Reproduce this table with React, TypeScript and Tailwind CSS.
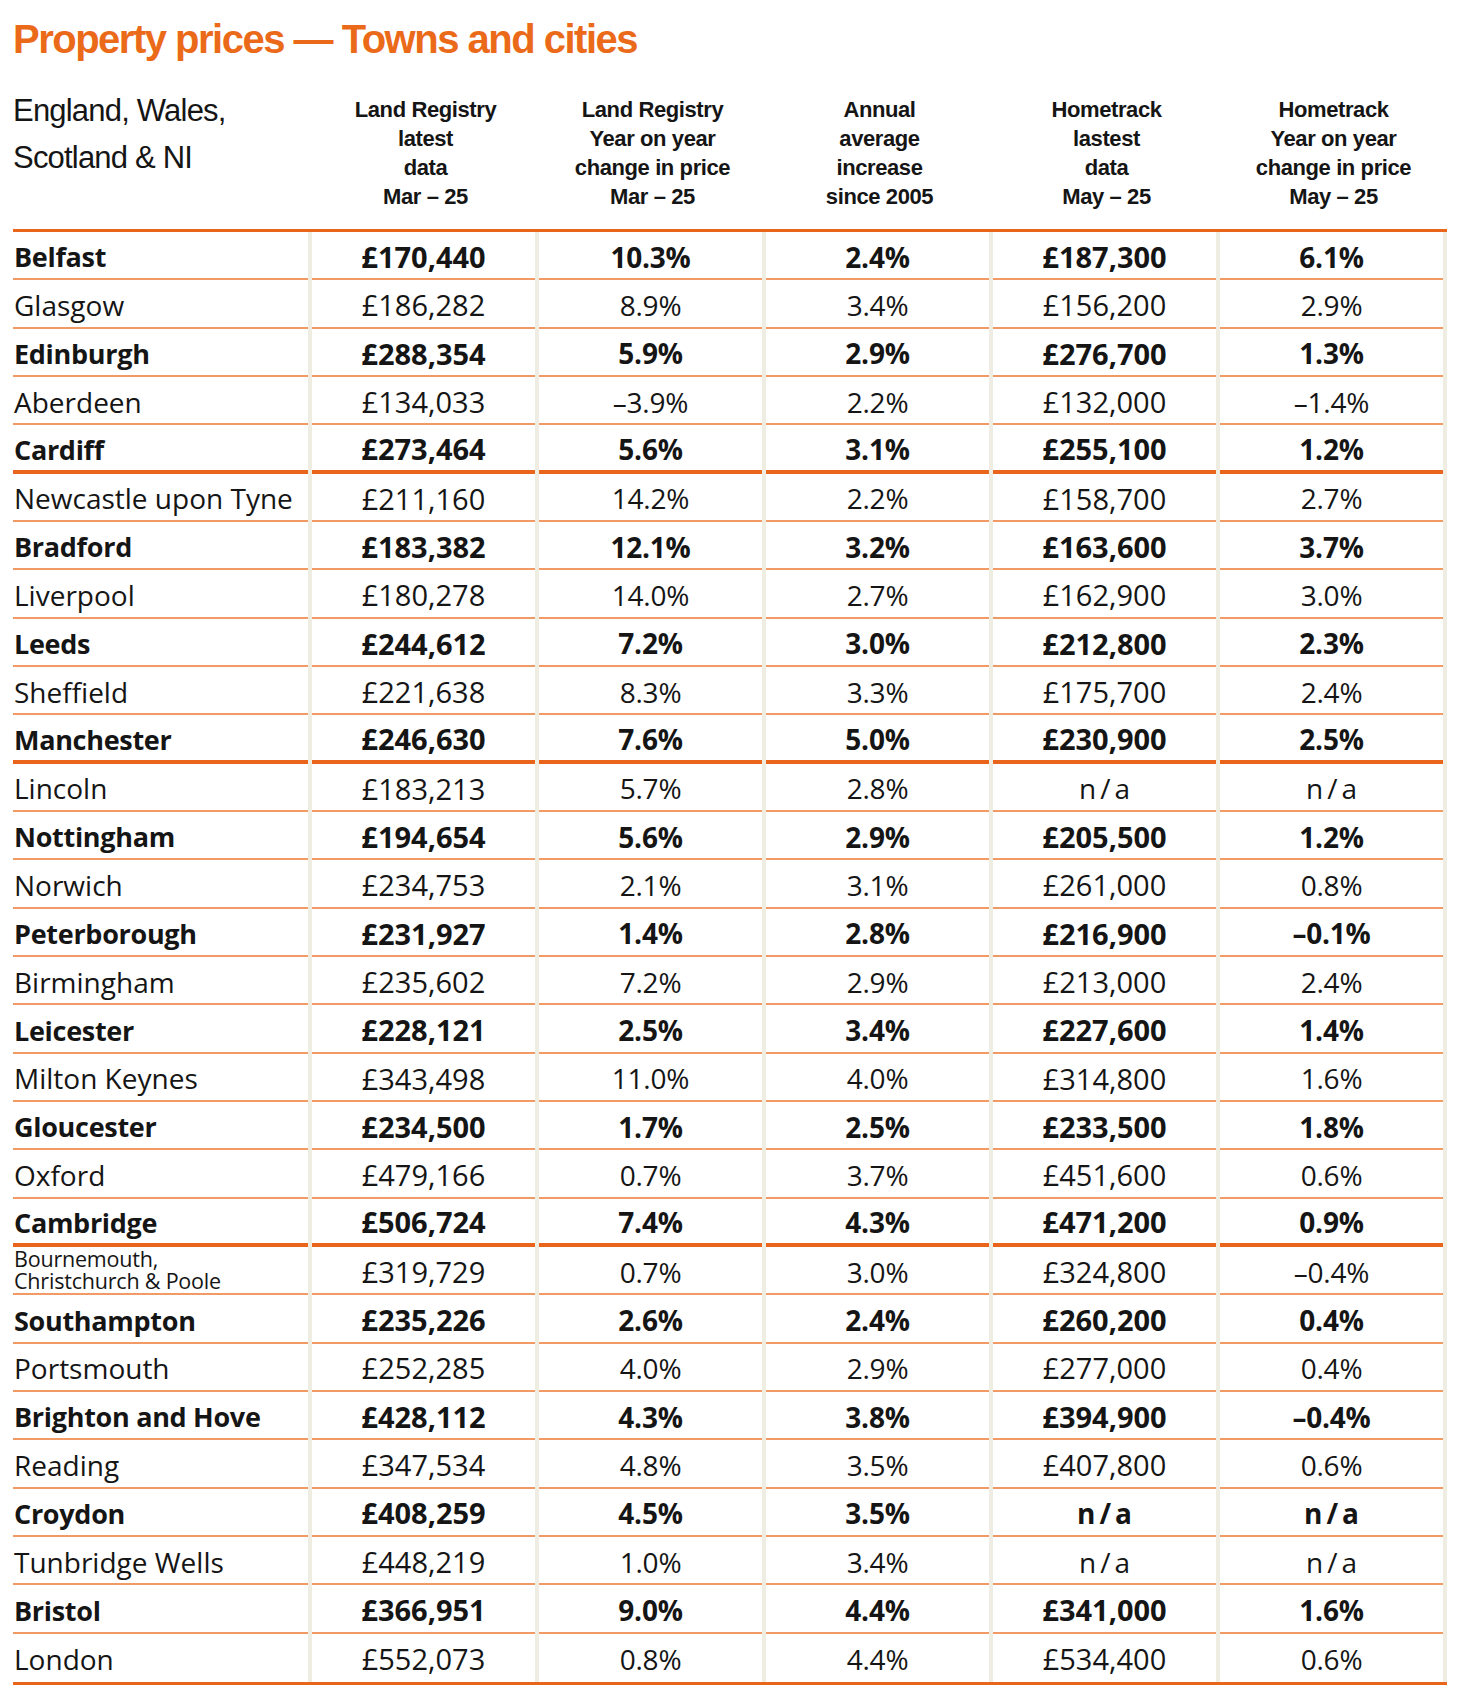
import React from "react";

type Row = { c: string[]; thick?: boolean; small?: boolean };

const rows: Row[] = [
  { c: ["Belfast", "£170,440", "10.3%", "2.4%", "£187,300", "6.1%"] },
  { c: ["Glasgow", "£186,282", "8.9%", "3.4%", "£156,200", "2.9%"] },
  { c: ["Edinburgh", "£288,354", "5.9%", "2.9%", "£276,700", "1.3%"] },
  { c: ["Aberdeen", "£134,033", "–3.9%", "2.2%", "£132,000", "–1.4%"] },
  { c: ["Cardiff", "£273,464", "5.6%", "3.1%", "£255,100", "1.2%"], thick: true },
  { c: ["Newcastle upon Tyne", "£211,160", "14.2%", "2.2%", "£158,700", "2.7%"] },
  { c: ["Bradford", "£183,382", "12.1%", "3.2%", "£163,600", "3.7%"] },
  { c: ["Liverpool", "£180,278", "14.0%", "2.7%", "£162,900", "3.0%"] },
  { c: ["Leeds", "£244,612", "7.2%", "3.0%", "£212,800", "2.3%"] },
  { c: ["Sheffield", "£221,638", "8.3%", "3.3%", "£175,700", "2.4%"] },
  { c: ["Manchester", "£246,630", "7.6%", "5.0%", "£230,900", "2.5%"], thick: true },
  { c: ["Lincoln", "£183,213", "5.7%", "2.8%", "n/a", "n/a"] },
  { c: ["Nottingham", "£194,654", "5.6%", "2.9%", "£205,500", "1.2%"] },
  { c: ["Norwich", "£234,753", "2.1%", "3.1%", "£261,000", "0.8%"] },
  { c: ["Peterborough", "£231,927", "1.4%", "2.8%", "£216,900", "–0.1%"] },
  { c: ["Birmingham", "£235,602", "7.2%", "2.9%", "£213,000", "2.4%"] },
  { c: ["Leicester", "£228,121", "2.5%", "3.4%", "£227,600", "1.4%"] },
  { c: ["Milton Keynes", "£343,498", "11.0%", "4.0%", "£314,800", "1.6%"] },
  { c: ["Gloucester", "£234,500", "1.7%", "2.5%", "£233,500", "1.8%"] },
  { c: ["Oxford", "£479,166", "0.7%", "3.7%", "£451,600", "0.6%"] },
  { c: ["Cambridge", "£506,724", "7.4%", "4.3%", "£471,200", "0.9%"], thick: true },
  { c: ["Bournemouth,|Christchurch & Poole", "£319,729", "0.7%", "3.0%", "£324,800", "–0.4%"], small: true },
  { c: ["Southampton", "£235,226", "2.6%", "2.4%", "£260,200", "0.4%"] },
  { c: ["Portsmouth", "£252,285", "4.0%", "2.9%", "£277,000", "0.4%"] },
  { c: ["Brighton and Hove", "£428,112", "4.3%", "3.8%", "£394,900", "–0.4%"] },
  { c: ["Reading", "£347,534", "4.8%", "3.5%", "£407,800", "0.6%"] },
  { c: ["Croydon", "£408,259", "4.5%", "3.5%", "n/a", "n/a"] },
  { c: ["Tunbridge Wells", "£448,219", "1.0%", "3.4%", "n/a", "n/a"] },
  { c: ["Bristol", "£366,951", "9.0%", "4.4%", "£341,000", "1.6%"] },
  { c: ["London", "£552,073", "0.8%", "4.4%", "£534,400", "0.6%"] },
];

const headers = [
  ["Land Registry", "latest", "data", "Mar – 25"],
  ["Land Registry", "Year on year", "change in price", "Mar – 25"],
  ["Annual", "average", "increase", "since 2005"],
  ["Hometrack", "lastest", "data", "May – 25"],
  ["Hometrack", "Year on year", "change in price", "May – 25"],
];

const Divider = () => <div className="w-[4px] shrink-0 bg-[#efece2]" />;

function valueClass(v: string) {
  if (v === "n/a") return "text-[28px] tracking-[4px] pl-[4px]";
  if (v.startsWith("£")) return "text-[29px] tracking-[0px]";
  return "text-[28px] tracking-[-0.2px]";
}

export default function App() {
  return (
    <div className="w-[1460px] h-[1689px] bg-white pl-[13px] text-[#151515]">
      <div
        className="h-[63px] pt-[15px] text-[40px] leading-[48px] font-bold tracking-[-1.5px] text-[#eb6a1a]"
        style={{ fontFamily: '"Liberation Sans", Arial, sans-serif' }}
      >
        Property prices — Towns and cities
      </div>
      <div className="flex h-[166px]" style={{ fontFamily: '"Liberation Sans", Arial, sans-serif' }}>
        <div className="w-[299px] shrink-0 pt-[24px] text-[31px] leading-[47px] tracking-[-0.8px]">
          <div>England, Wales,</div>
          <div>Scotland &amp; NI</div>
        </div>
        {headers.map((h, i) => (
          <div
            key={i}
            className="w-[227px] shrink-0 pt-[32px] flex flex-col items-center text-[22px] leading-[29px] font-bold tracking-[-0.4px]"
          >
            {h.map((l, j) => (
              <div key={j}>{l}</div>
            ))}
          </div>
        ))}
      </div>
      <div
        className="w-[1434px] border-t-[3px] border-b-[3px] border-[#e8651b]"
        style={{ fontFamily: '"Open Sans", "Noto Sans", sans-serif' }}
      >
        {rows.map((r, i) => {
          const bold = i % 2 === 0;
          const last = i === rows.length - 1;
          const bcls = last
            ? ""
            : r.thick
            ? "border-b-[4px] border-[#e8651b]"
            : "border-b-2 border-[#f29a66]";
          return (
            <div key={i} className="flex h-[48.33px]">
              <div
                className={
                  "w-[295px] shrink-0 flex items-center pl-[1px] " +
                  (bold ? "pt-[5px] font-bold " : "pt-[3px] ") +
                  bcls
                }
              >
                {r.small ? (
                  <div className="text-[21.5px] leading-[22px] tracking-[-0.2px] -mt-[3px]">
                    {r.c[0].split("|").map((s, k) => (
                      <div key={k}>{s}</div>
                    ))}
                  </div>
                ) : bold ? (
                  <span className="text-[27px] tracking-[-0.3px]">{r.c[0]}</span>
                ) : (
                  <span className="text-[28px] tracking-[0px]">{r.c[0]}</span>
                )}
              </div>
              {r.c.slice(1).map((v, k) => (
                <React.Fragment key={k}>
                  <Divider />
                  <div
                    className={
                      "w-[223px] shrink-0 flex items-center justify-center pt-[3px] " +
                      valueClass(v) +
                      " " +
                      bcls +
                      (bold ? " font-bold" : "")
                    }
                  >
                    {v}
                  </div>
                </React.Fragment>
              ))}
              <Divider />
            </div>
          );
        })}
      </div>
    </div>
  );
}
